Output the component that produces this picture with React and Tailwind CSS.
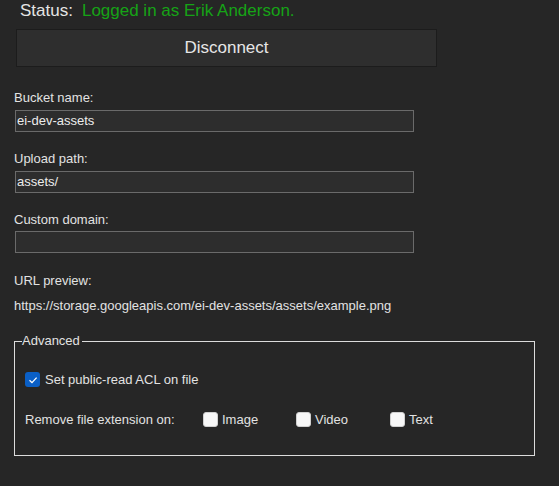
import React from "react";

const font = { fontFamily: '"Liberation Sans", Arial, sans-serif' };

const Field = ({ label, value, top, gap }) => (
  <div className={"ml-[14px] " + top}>
    <div className="text-[13px] leading-4 text-[#e2e2e2]">{label}</div>
    <div className={"ml-px w-[399px] h-[22px] bg-[#2d2d2d] border border-[#6a6a6a] flex items-center px-[1px] text-[13px] text-[#ececec] " + gap}>
      {value}
    </div>
  </div>
);

const Box = ({ checked }) =>
  checked ? (
    <span className="w-[15px] h-[15px] rounded-[3px] bg-[#0a5fc6] flex items-center justify-center shrink-0">
      <svg width="10" height="10" viewBox="0 0 10 10" fill="none">
        <path d="M1.5 5.2 L4 7.6 L8.6 2.6" stroke="#ffffff" strokeWidth="1.3" />
      </svg>
    </span>
  ) : (
    <span className="w-[15px] h-[15px] rounded-[3px] bg-[#f7f7f7] border border-[#d0d0d0] shrink-0" />
  );

const Option = ({ label, className }) => (
  <div className={"flex items-center gap-[4px] " + className}>
    <Box />
    <span className="text-[13px] text-[#e2e2e2]">{label}</span>
  </div>
);

export default function App() {
  return (
    <div className="w-full h-[486px] bg-[#262626] overflow-hidden" style={font}>
      <div className="pl-5 h-[22px] flex items-center text-[17px] leading-5">
        <span className="text-[#e4e4e4]">Status:</span>
        <span className="ml-[9px] text-[#16a316]">Logged in as Erik Anderson.</span>
      </div>

      <button className="mt-[7px] ml-4 w-[421px] h-[38px] bg-[#2e2e2e] border border-[#1c1c1c] text-[17px] text-[#e6e6e6] flex items-center justify-center">
        Disconnect
      </button>

      <Field label="Bucket name:" value="ei-dev-assets" top="mt-[23px]" gap="mt-[4px]" />
      <Field label="Upload path:" value="assets/" top="mt-[19px]" gap="mt-[4px]" />
      <Field label="Custom domain:" value="" top="mt-[19px]" gap="mt-[3px]" />

      <div className="mt-[20px] ml-[14px] text-[13px] text-[#e2e2e2]">
        <div className="leading-4">URL preview:</div>
        <div className="mt-[9px] leading-4">
          https://storage.googleapis.com/ei-dev-assets/assets/example.png
        </div>
      </div>

      <fieldset className="mt-[19px] ml-[14px] w-[521px] h-[123px] border border-[#dcdcdc] pl-[10px]">
        <legend className="ml-[-3px] pr-[2px] text-[13px] leading-4 text-[#e2e2e2]">
          Advanced
        </legend>
        <div className="mt-[21px] flex items-center gap-[5px]">
          <Box checked />
          <span className="text-[13px] text-[#e2e2e2]">Set public-read ACL on file</span>
        </div>
        <div className="mt-[20px] flex items-start">
          <span className="w-[178px] mt-[2px] text-[13px] leading-4 text-[#e2e2e2]">
            Remove file extension on:
          </span>
          <Option label="Image" className="w-[93px]" />
          <Option label="Video" className="w-[94px]" />
          <Option label="Text" />
        </div>
      </fieldset>
    </div>
  );
}
